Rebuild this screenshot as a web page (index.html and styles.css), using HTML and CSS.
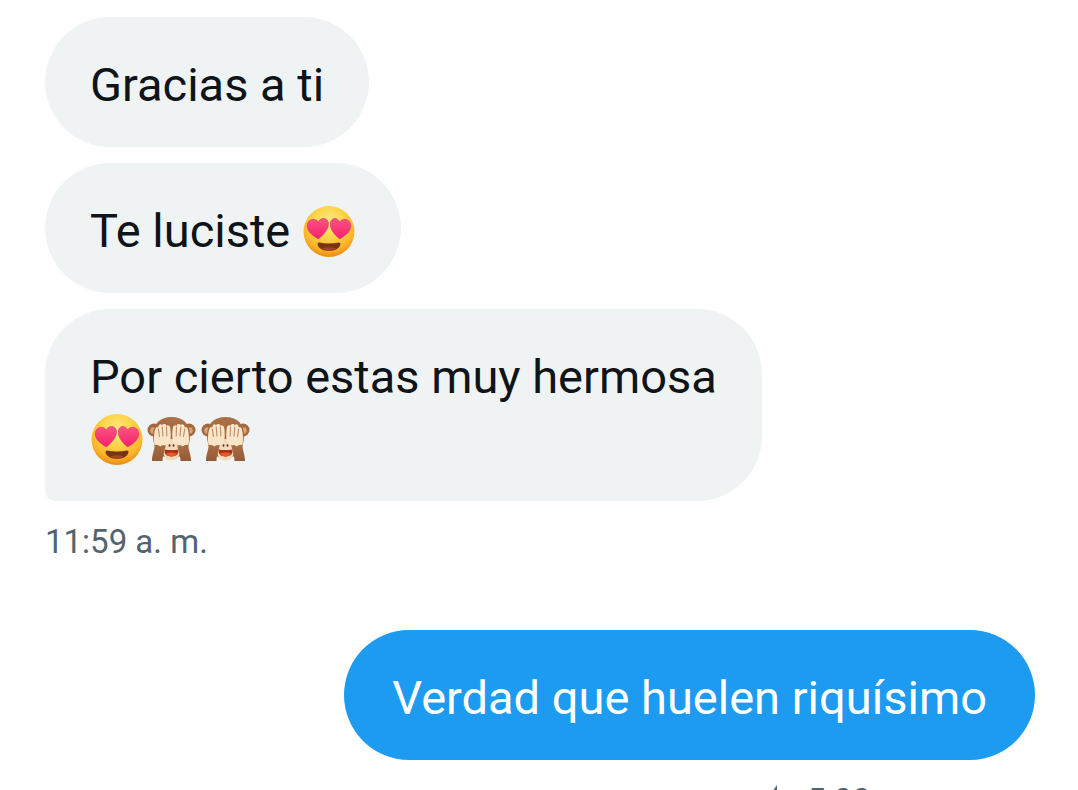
FILE: index.html
```html
<!DOCTYPE html>
<html lang="es">
<head>
    <meta charset="UTF-8">
    <meta name="viewport" content="width=device-width, initial-scale=1.0">
    <title>Mensajes</title>
    <link rel="stylesheet" href="styles.css">
</head>
<body>
    <!-- Shared emoji drawings -->
    <svg class="sprites" width="0" height="0" aria-hidden="true">
        <defs>
            <radialGradient id="face" cx="50%" cy="32%" r="68%">
                <stop offset="0" stop-color="#ffe98c"/>
                <stop offset="0.45" stop-color="#fdd548"/>
                <stop offset="0.8" stop-color="#fbb328"/>
                <stop offset="1" stop-color="#ea8a12"/>
            </radialGradient>
            <linearGradient id="heart" x1="0" y1="0" x2="0" y2="1">
                <stop offset="0" stop-color="#fa5580"/>
                <stop offset="1" stop-color="#f71e70"/>
            </linearGradient>
            <linearGradient id="fur" x1="0" y1="0" x2="0" y2="1">
                <stop offset="0" stop-color="#ad7148"/>
                <stop offset="1" stop-color="#935a35"/>
            </linearGradient>
            <symbol id="love" viewBox="0 0 54 54">
                <circle cx="27" cy="26.500" r="25.500" fill="url(#face)"/>
                <path d="M15.500 33.500C9 29.500 5 25.500 5.200 20.500C5.400 14.500 12.500 12 16.500 17C18.500 11.500 27 12.500 26.500 19.500C26 25 21.500 29.500 17 33.500Q16 34.200 15.500 33.500Z" fill="url(#heart)" stroke="#dc3568" stroke-width="0.600"/>
                <path d="M38.500 33.500C45 29.500 49 25.500 48.800 20.500C48.600 14.500 41.500 12 37.500 17C35.500 11.500 28 12.500 28.300 19.500C28.500 25 32.500 29.500 37 33.500Q38 34.200 38.500 33.500Z" fill="url(#heart)" stroke="#dc3568" stroke-width="0.600"/>
                <path d="M17 37.500Q27 39.500 37 37.500Q38.800 37.500 38.500 39.200C37 48 17 48 15.500 39.200Q15.200 37.500 17 37.500Z" fill="#753713"/>
                <path d="M20 43.500Q27 41 34 43.500Q27 47 20 43.500Z" fill="#a5442b"/>
            </symbol>
            <symbol id="monkey" viewBox="0 0 54 54">
                <circle cx="10" cy="17" r="6.500" fill="#a3683f"/>
                <circle cx="45" cy="17" r="6.500" fill="#a3683f"/>
                <circle cx="9.500" cy="17.500" r="3.200" fill="#dba57c"/>
                <circle cx="45.500" cy="17.500" r="3.200" fill="#dba57c"/>
                <path d="M27.500 4C15 4 9 12 9 22C9 36 15 45 27.500 45C40 45 46 36 46 22C46 12 40 4 27.500 4Z" fill="url(#fur)"/>
                <path d="M20 28C18 40 19 47.500 27.500 47.500C36 47.500 37 40 35 28Q27.500 24 20 28Z" fill="#f4d9ba"/>
                <ellipse cx="25.500" cy="32.500" rx="0.900" ry="1.300" fill="#5b3420"/>
                <ellipse cx="29.500" cy="32.500" rx="0.900" ry="1.300" fill="#5b3420"/>
                <path d="M20.500 36.500Q27.500 37.500 34.500 36.500Q35 43.500 27.500 43.500Q20 43.500 20.500 36.500Z" fill="#a83413"/>
                <path d="M22 40.500Q27.500 38.500 33 40.500Q31 43.500 27.500 43.500Q24 43.500 22 40.500Z" fill="#e95a2a"/>
                <g id="arm">
                    <path d="M10.500 29C11.500 36 8 40 8 48H18.500C18.500 42 21 37 22.500 29Z" fill="url(#fur)"/>
                    <path d="M10.500 32C9.500 26 10 19 11.500 15.500Q12.500 13 14.300 14.500C14.500 11 17.500 10.500 18 12.500C19 10.500 22 10.500 22.500 13C23.500 11.500 26 12.500 26.200 15C27 20 27 26 26 29C24.500 33 22.500 30.500 21 32.500Q18.500 31 16.500 33.500Q13.500 31 10.500 32Z" fill="#f9e5c7"/>
                    <path d="M14.300 16L15.500 23.500M18.200 14L19 23M22.500 14L22.800 23" fill="none" stroke="#bd8c63" stroke-width="1.100" stroke-linecap="round"/>
                </g>
                <use href="#arm" transform="translate(55 0) scale(-1 1)"/>
            </symbol>
        </defs>
    </svg>

    <main class="chat">
        <section class="group received">
            <p class="bubble">Gracias a ti</p>
            <p class="bubble">Te luciste <svg class="emoji" role="img" aria-label="Cara enamorada"><use href="#love"/></svg></p>
            <p class="bubble last">Por cierto estas muy hermosa<br><svg class="emoji" role="img" aria-label="Cara enamorada"><use href="#love"/></svg><svg class="emoji" role="img" aria-label="Mono tapándose los ojos"><use href="#monkey"/></svg><svg class="emoji" role="img" aria-label="Mono tapándose los ojos"><use href="#monkey"/></svg></p>
            <time class="time" datetime="11:59">11:59 a. m.</time>
        </section>

        <section class="group sent">
            <p class="bubble">Verdad que huelen riquísimo</p>
            <div class="status">
                <svg class="bolt" viewBox="0 0 24 32" aria-hidden="true"><path d="M14 0L2 17H11L9 32L22 13H14Z" fill="#536471"/></svg>
                <time class="time" datetime="17:00">5:00 p. m.</time>
            </div>
        </section>
    </main>
</body>
</html>
```
FILE: styles.css
```css
:root {
    --received: #eff3f4;
    --sent: #1d9bf0;
    --text-color: #0f1419;
    --muted: #536471;
}

* {
    margin: 0;
    padding: 0;
    box-sizing: border-box;
}

body {
    font-family: Roboto, "Noto Sans", sans-serif;
    background-color: #ffffff;
    color: var(--text-color);
}

.sprites {
    position: absolute;
}

.chat {
    display: flex;
    flex-direction: column;
    gap: 63px;
    padding: 17px 43px 0 45px;
}

.group {
    display: flex;
    flex-direction: column;
    align-items: flex-start;
    gap: 16px;
}

.bubble {
    max-width: 80%;
    padding: 37px 45px 31px;
    border-radius: 65px;
    background-color: var(--received);
    font-size: 47px;
    line-height: 62px;
}

.bubble.last {
    border-bottom-left-radius: 10px;
}

.emoji {
    display: inline-block;
    width: 54px;
    height: 54px;
    vertical-align: -12px;
}

.time {
    color: var(--muted);
    font-size: 33px;
    line-height: 50px;
}

.sent {
    align-items: flex-end;
}

.sent .bubble {
    padding-left: 48px;
    padding-right: 48px;
    background-color: var(--sent);
    color: #ffffff;
}

.status {
    display: flex;
    align-items: center;
    gap: 20px;
    margin-right: 83px;
}

.bolt {
    width: 24px;
    height: 32px;
}
```
